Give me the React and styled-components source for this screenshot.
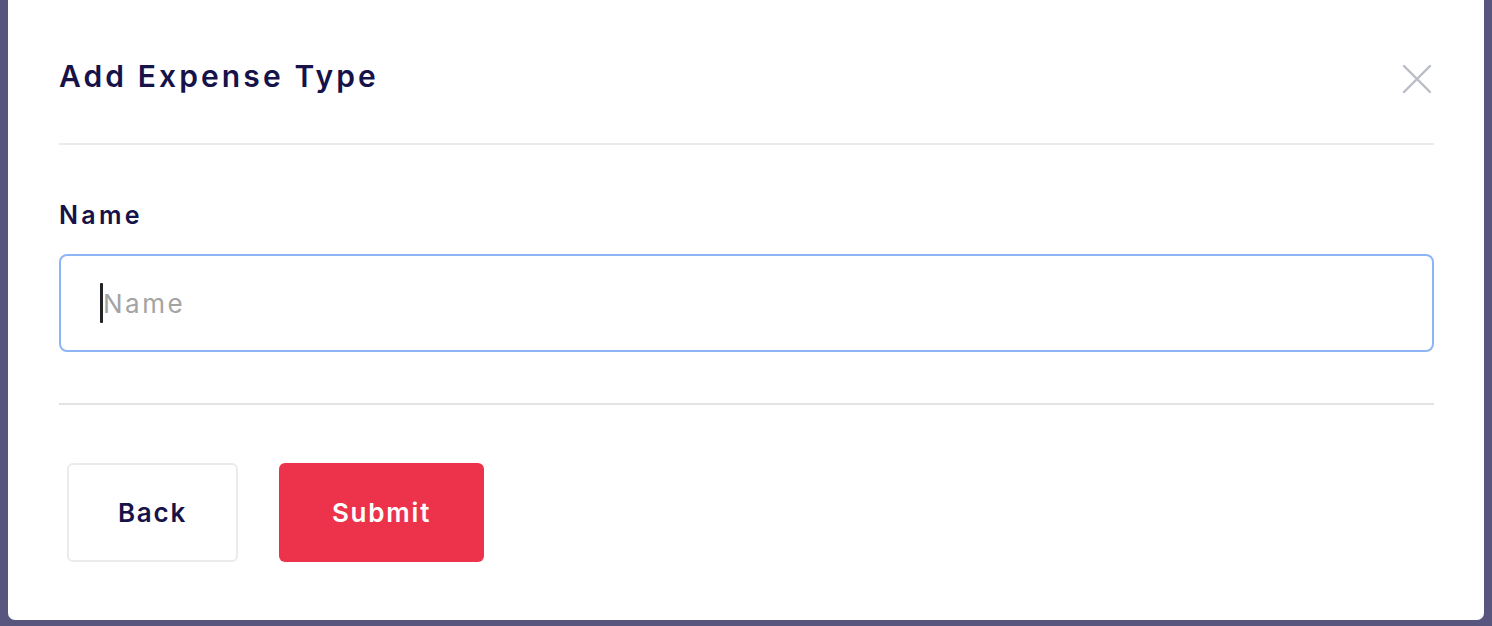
import React from "react";
import styled, { createGlobalStyle } from "styled-components";

const GlobalStyle = createGlobalStyle`
    html, body {
        margin: 0;
        padding: 0;
        background: #58557f;
    }
    * {
        box-sizing: border-box;
    }
`;

const Page = styled.div`
    height: 626px;
    padding: 0 8px;
    background: #58557f;
    overflow: hidden;
    font-family: "Inter", "Liberation Sans", sans-serif;
`;

const Modal = styled.div`
    height: 620px;
    width: 1476px;
    background: #ffffff;
    border-radius: 0 0 7px 7px;
    padding: 0 50px 0 51px;
    display: flex;
    flex-direction: column;
`;

const Header = styled.div`
    height: 145px;
    padding-top: 8px;
    display: flex;
    align-items: center;
    justify-content: space-between;
    border-bottom: 2px solid #ebebeb;
`;

const Title = styled.h2`
    margin: 0;
    font-size: 30px;
    font-weight: 600;
    letter-spacing: 3.1px;
    color: #16134a;
`;

const CloseButton = styled.button`
    border: none;
    background: none;
    padding: 0;
    margin-right: 2px;
    margin-top: 6px;
    width: 30px;
    height: 30px;
    display: flex;
    align-items: center;
    justify-content: center;
    cursor: pointer;
`;

const Body = styled.div`
    padding: 52px 0 51px;
    border-bottom: 2px solid #e3e3e6;
`;

const Label = styled.label`
    display: block;
    font-size: 25px;
    line-height: 36px;
    font-weight: 600;
    letter-spacing: 3.3px;
    color: #16134a;
    margin-bottom: 21px;
`;

const Field = styled.div`
    position: relative;
`;

const Input = styled.input`
    width: 100%;
    height: 98px;
    border: 2px solid #8db5f5;
    border-radius: 8px;
    padding: 0 0 0 42px;
    font-family: "Inter", "Liberation Sans", sans-serif;
    font-size: 26px;
    letter-spacing: 2.5px;
    color: #16134a;
    outline: none;
    caret-color: transparent;
    &::placeholder {
        color: #a3a3a3;
    }
`;

const Caret = styled.span`
    position: absolute;
    left: 41px;
    top: 29px;
    width: 3px;
    height: 40px;
    border-radius: 1px;
    background: #222326;
`;

const Actions = styled.div`
    padding: 58px 0 0 8px;
    display: flex;
    gap: 41px;
`;

const Button = styled.button`
    height: 99px;
    width: ${(p) => p.$width}px;
    border-radius: 6px;
    border: ${(p) => (p.$primary ? "none" : "2px solid #ebebeb")};
    background: ${(p) => (p.$primary ? "#ed334b" : "#ffffff")};
    color: ${(p) => (p.$primary ? "#ffffff" : "#16134a")};
    font-family: "Inter", "Liberation Sans", sans-serif;
    font-size: 26px;
    font-weight: 600;
    letter-spacing: 1.8px;
    cursor: pointer;
`;

export default function App() {
    return (
        <>
            <GlobalStyle />
            <Page>
                <Modal>
                    <Header>
                        <Title>Add Expense Type</Title>
                        <CloseButton aria-label="Close">
                            <svg width="30" height="30" viewBox="0 0 30 30">
                                <path
                                    d="M2 2 L28 28 M28 2 L2 28"
                                    stroke="#b9bdc6"
                                    strokeWidth="2.4"
                                    strokeLinecap="round"
                                />
                            </svg>
                        </CloseButton>
                    </Header>
                    <Body>
                        <Label htmlFor="name">Name</Label>
                        <Field>
                            <Input id="name" placeholder="Name" />
                            <Caret />
                        </Field>
                    </Body>
                    <Actions>
                        <Button $width={171}>Back</Button>
                        <Button $primary $width={205}>Submit</Button>
                    </Actions>
                </Modal>
            </Page>
        </>
    );
}
